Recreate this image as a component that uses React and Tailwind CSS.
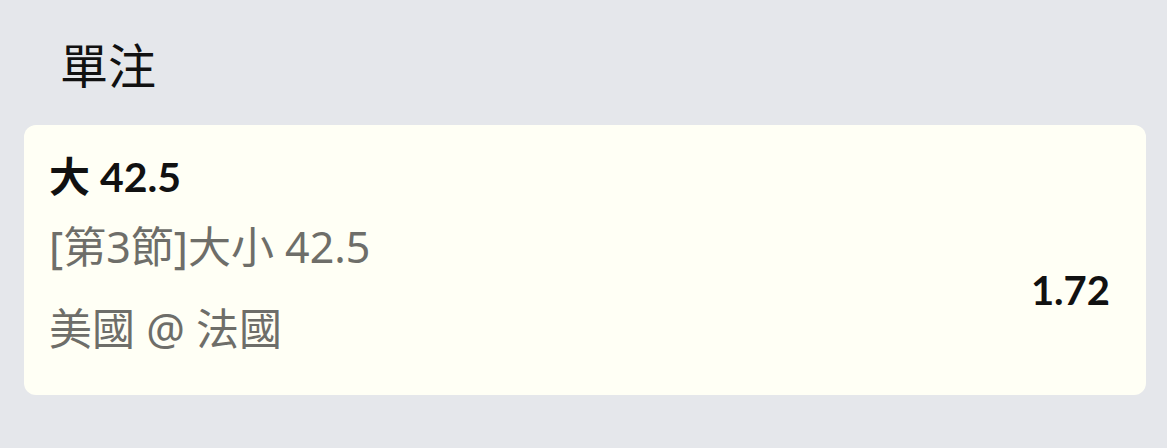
import React from 'react';

const bet = {
  pick: '大 42.5',
  market: '[第3節]大小 42.5',
  match: '美國 @ 法國',
  odds: '1.72',
};

export default function App() {
  return (
    <div className="min-h-[448px] w-full bg-[#e5e7eb] pl-6 pr-[21px] pt-[42px] font-['Lato','Noto_Sans_CJK_TC',sans-serif]">
      <h1 className="pl-9 text-[48px] leading-[48px] font-normal text-[#111]">單注</h1>

      <div className="mt-[35px] rounded-[12px] bg-[#fffff5] pl-[25px] pr-9 pt-[27px] pb-[41px]">
        <div className="text-[41px] leading-[50px] font-bold text-[#111]">{bet.pick}</div>
        <div className="flex items-start justify-between">
          <div className="font-['Noto_Sans','Noto_Sans_CJK_TC',sans-serif] text-[43px] leading-[50px] text-[#6e6e69]">
            <div className="mt-5">{bet.market}</div>
            <div className="mt-8">{bet.match}</div>
          </div>
          <div className="mt-[63px] text-[40px] leading-[50px] font-bold text-[#111]">{bet.odds}</div>
        </div>
      </div>
    </div>
  );
}
